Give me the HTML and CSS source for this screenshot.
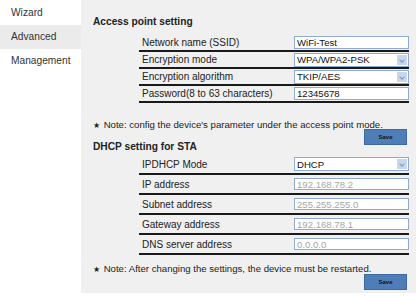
FILE: index.html
```html
<!DOCTYPE html>
<html lang="en">
<head>
  <meta charset="UTF-8" />
  <title>Advanced</title>
  <link rel="stylesheet" href="styles.css">
</head>
<body>
  <div class="sidebar">
    <div class="nav-item">Wizard</div>
    <div class="nav-item active">Advanced</div>
    <div class="nav-item">Management</div>
  </div>

  <div class="main">
    <div class="section-title">Access point setting</div>
    <div class="form ap">
      <div class="row">
        <div class="label">Network name (SSID)</div>
        <div class="field"><input type="text" value="WiFi-Test" /></div>
      </div>
      <div class="row">
        <div class="label">Encryption mode</div>
        <div class="field">
          <div class="select"><span>WPA/WPA2-PSK</span><i class="arrow"></i></div>
        </div>
      </div>
      <div class="row">
        <div class="label">Encryption algorithm</div>
        <div class="field">
          <div class="select"><span>TKIP/AES</span><i class="arrow"></i></div>
        </div>
      </div>
      <div class="row">
        <div class="label">Password(8 to 63 characters)</div>
        <div class="field"><input type="text" value="12345678" /></div>
      </div>
    </div>

    <div class="note"><span class="star">★</span> Note: config the device's parameter under the access point mode.</div>
    <div class="actions first"><button>Save</button></div>

    <div class="section-title dhcp-title">DHCP setting for STA</div>
    <div class="form dhcp">
      <div class="row">
        <div class="label">IPDHCP Mode</div>
        <div class="field">
          <div class="select"><span>DHCP</span><i class="arrow"></i></div>
        </div>
      </div>
      <div class="row">
        <div class="label">IP address</div>
        <div class="field"><input type="text" placeholder="192.168.78.2" /></div>
      </div>
      <div class="row">
        <div class="label">Subnet address</div>
        <div class="field"><input type="text" placeholder="255.255.255.0" /></div>
      </div>
      <div class="row">
        <div class="label">Gateway address</div>
        <div class="field"><input type="text" placeholder="192.168.78.1" /></div>
      </div>
      <div class="row">
        <div class="label">DNS server address</div>
        <div class="field"><input type="text" placeholder="0.0.0.0" /></div>
      </div>
    </div>

    <div class="note note-last"><span class="star">★</span> Note: After changing the settings, the device must be restarted.</div>
    <div class="actions last"><button>Save</button></div>
  </div>
</body>
</html>
```

FILE: styles.css
```css
body {
  margin: 0;
  display: flex;
  font-family: 'Liberation Sans', Arial, sans-serif;
  font-size: 10px;
  color: #222;
  background: #fff;
}

.sidebar {
  width: 81px;
  padding-top: 1px;
  flex-shrink: 0;
}

.nav-item {
  height: 24px;
  line-height: 24px;
  padding-left: 11px;
  font-size: 10.2px;
  color: #333;
}

.nav-item.active {
  background: #ebebeb;
}

.main {
  flex: 1;
  height: 293px;
  background: #f0f0f0;
  padding-left: 12px;
  padding-right: 7px;
  box-sizing: border-box;
}

.section-title {
  font-weight: bold;
  font-size: 10.2px;
  line-height: 14px;
  margin-top: 15px;
}

.form {
  margin-left: 46px;
  margin-top: 6px;
}

.row {
  display: flex;
  align-items: center;
  border-bottom: 2px solid #1a1a1a;
  box-sizing: border-box;
}

.ap .row {
  height: 17px;
}

.dhcp .row {
  height: 20px;
}

.label {
  width: 155px;
  padding-left: 3px;
  box-sizing: border-box;
  color: #222;
}

.field {
  flex: 1;
}

input {
  width: 100%;
  height: 13px;
  box-sizing: border-box;
  border: 1px solid #8eaad3;
  background: #fff;
  font-family: 'Liberation Sans', Arial, sans-serif;
  font-size: 9.6px;
  padding: 0 2px;
  color: #111;
  margin: 0;
}

.dhcp input {
  height: 12px;
}

input::placeholder {
  color: #a5a5a5;
}

.select {
  display: flex;
  align-items: center;
  height: 12px;
  border: 1px solid #8eaad3;
  background: #fff;
  padding-left: 2px;
  font-size: 9.6px;
  color: #111;
}

.select span {
  flex: 1;
}

.arrow {
  width: 10px;
  height: 10px;
  margin-right: 1px;
  background: #c9d7ea;
  position: relative;
}

.arrow::after {
  content: '';
  position: absolute;
  left: 3px;
  top: 3px;
  width: 3px;
  height: 3px;
  border-right: 1px solid #7d96ba;
  border-bottom: 1px solid #7d96ba;
  transform: rotate(45deg);
}

.note {
  font-size: 9.6px;
  line-height: 14px;
  margin-top: 15px;
  color: #222;
}

.note-last {
  margin-top: 7px;
}

.star {
  font-size: 8px;
  margin-right: 1px;
}

.actions {
  display: flex;
  justify-content: flex-end;
  padding-right: 2px;
}

.actions.first {
  margin-top: -4px;
}

.actions.last {
  margin-top: -3px;
}

button {
  width: 43px;
  height: 16px;
  background: #4f7db8;
  border: 1px solid #3e6aa2;
  font-family: 'Liberation Sans', Arial, sans-serif;
  font-size: 6px;
  font-weight: bold;
  color: #111;
  padding: 0;
}

.dhcp-title {
  margin-top: -5px;
}

.dhcp {
  margin-top: 1px;
}
```
